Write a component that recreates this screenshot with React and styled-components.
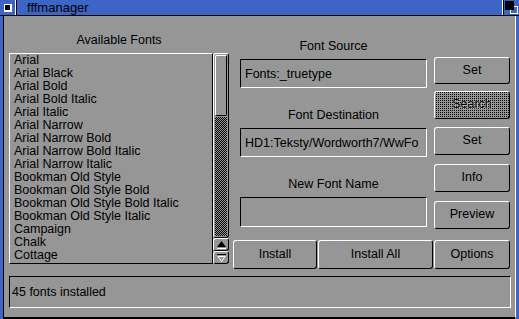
import React from "react";
import styled, { createGlobalStyle, css } from "styled-components";

// Amiga Workbench palette
const GRAY = "#969696";
const BLUE = "#3d65c5";

const GlobalStyle = createGlobalStyle`
  html, body {
    margin: 0;
    padding: 0;
    width: 519px;
    height: 319px;
    overflow: hidden;
    background: ${GRAY};
  }
  * {
    box-sizing: border-box;
  }
`;

const raised = css`
  border: 1px solid;
  border-color: #fff #000 #000 #fff;
`;

const recessed = css`
  border: 1px solid;
  border-color: #000 #fff #fff #000;
`;

const Window = styled.div`
  width: 519px;
  height: 319px;
  display: flex;
  flex-direction: column;
  background: ${BLUE};
  font-family: "Liberation Sans", Arial, sans-serif;
  font-size: 12.5px;
  color: #000;
`;

const TitleBar = styled.div`
  height: 16px;
  display: flex;
  align-items: stretch;
  border-bottom: 1px solid #000;
`;

const CloseGadget = styled.div`
  width: 17px;
  display: flex;
  align-items: center;
  justify-content: center;
  border-right: 1px solid #000;
  box-shadow: inset -1px 0 0 #fff;
`;

const CloseBox = styled.div`
  width: 8px;
  height: 8px;
  background: #000;
  border: 1px solid #fff;
  border-right-width: 2px;
  border-bottom-width: 2px;
`;

const Title = styled.div`
  flex: 1;
  padding-left: 10px;
  font-size: 13px;
  line-height: 15px;
`;

const DepthGadget = styled.div`
  width: 16px;
  display: flex;
  align-items: center;
  justify-content: center;
  border-left: 1px solid #000;
  box-shadow: -1px 0 0 #fff;
`;

const Body = styled.div`
  flex: 1;
  margin: 0 3px;
  background: ${GRAY};
  border-left: 1px solid #000;
  border-right: 1px solid #fff;
  border-bottom: 2px solid #000;
  padding: 3px 4px 9px 5px;
  display: flex;
  flex-direction: column;
  gap: 7px;
`;

const Main = styled.div`
  height: 250px;
  display: flex;
  gap: 4px;
`;

const LeftColumn = styled.div`
  width: 220px;
  display: flex;
  flex-direction: column;
`;

const Label = styled.div`
  height: ${(p) => p.$h}px;
  display: flex;
  align-items: flex-end;
  justify-content: center;
  padding-bottom: 6px;
  line-height: 13px;
  white-space: nowrap;
`;

const ListRow = styled.div`
  height: 211px;
  display: flex;
`;

const FontList = styled.div`
  width: 204px;
  ${raised};
  padding-left: 4px;
  overflow: hidden;
`;

const FontItem = styled.div`
  height: 13px;
  line-height: 13px;
  white-space: nowrap;
`;

const Scroller = styled.div`
  width: 16px;
  display: flex;
  flex-direction: column;
`;

const PropGadget = styled.div`
  flex: 1;
  ${raised};
  border-radius: 3px;
  padding: 1px;
  display: flex;
  flex-direction: column;
`;

const Knob = styled.div`
  height: 61px;
  ${raised};
  border-radius: 2px;
`;

const Track = styled.div`
  flex: 1;
  margin-top: 1px;
  background-color: ${GRAY};
  background-image: repeating-conic-gradient(#000 0 25%, transparent 0 50%);
  background-size: 2px 2px;
`;

const ArrowButton = styled.div`
  height: 13px;
  ${raised};
  border-radius: 3px;
  display: flex;
  align-items: center;
  justify-content: center;
`;

const RightColumn = styled.div`
  width: 277px;
  display: flex;
  flex-direction: column;
`;

const Upper = styled.div`
  display: flex;
  gap: 2px;
`;

const FieldColumn = styled.div`
  width: 199px;
  padding: 0 5px 0 7px;
  display: flex;
  flex-direction: column;
`;

const Field = styled.div`
  height: ${(p) => p.$h || 29}px;
  ${recessed};
  padding-left: 4px;
  display: flex;
  align-items: center;
  white-space: nowrap;
  overflow: hidden;
`;

const ButtonColumn = styled.div`
  width: 76px;
  display: flex;
  flex-direction: column;
`;

const Button = styled.div`
  height: ${(p) => p.$h || 28}px;
  margin-top: ${(p) => p.$mt || 0}px;
  ${raised};
  border-radius: 3px;
  display: flex;
  align-items: center;
  justify-content: center;
  padding-bottom: 2px;
  white-space: nowrap;
  ${(p) => p.$grow && "flex: 1;"}
  ${(p) => p.$w && `width: ${p.$w}px;`}
  ${(p) =>
    p.$ghost &&
    css`
      background-color: ${GRAY};
      background-image: conic-gradient(from 0deg at 1px 1px, #000 0 25%, transparent 0);
      background-size: 2px 2px;
      color: #000;
      text-shadow: 1px 0 0 rgba(255, 255, 255, 0.45), 0 1px 0 rgba(255, 255, 255, 0.35);
    `}
`;

const ButtonRow = styled.div`
  margin-top: auto;
  height: 29px;
  display: flex;
  gap: 1px;
`;

const Status = styled.div`
  height: 32px;
  ${recessed};
  padding-left: 2px;
  display: flex;
  align-items: center;
`;

const fonts = [
  "Arial",
  "Arial Black",
  "Arial Bold",
  "Arial Bold Italic",
  "Arial Italic",
  "Arial Narrow",
  "Arial Narrow Bold",
  "Arial Narrow Bold Italic",
  "Arial Narrow Italic",
  "Bookman Old Style",
  "Bookman Old Style Bold",
  "Bookman Old Style Bold Italic",
  "Bookman Old Style Italic",
  "Campaign",
  "Chalk",
  "Cottage",
];

const DepthIcon = () => (
  <svg width="13" height="13" viewBox="0 0 13 13">
    <rect x="5.5" y="5.5" width="7" height="7" fill={BLUE} stroke="#fff" />
    <rect x="1" y="1" width="8" height="8" fill="#000" />
    <rect x="0.5" y="0.5" width="8" height="8" fill="none" stroke="#000" />
  </svg>
);

const UpArrow = () => (
  <svg width="9" height="8" viewBox="0 0 9 8">
    <polygon points="4.5,0 9,6 0,6" fill="#000" />
    <line x1="0" y1="7.5" x2="9" y2="7.5" stroke="#fff" />
  </svg>
);

const DownArrow = () => (
  <svg width="9" height="8" viewBox="0 0 9 8">
    <line x1="0" y1="0.5" x2="9" y2="0.5" stroke="#000" />
    <polygon points="1,2.5 8,2.5 4.5,7.5" fill="none" stroke="#fff" />
  </svg>
);

const App = () => {
  return (
    <>
      <GlobalStyle />
      <Window>
        <TitleBar>
          <CloseGadget>
            <CloseBox />
          </CloseGadget>
          <Title>fffmanager</Title>
          <DepthGadget>
            <DepthIcon />
          </DepthGadget>
        </TitleBar>
        <Body>
          <Main>
            <LeftColumn>
              <Label $h={34}>Available Fonts</Label>
              <ListRow>
                <FontList>
                  {fonts.map((f) => (
                    <FontItem key={f}>{f}</FontItem>
                  ))}
                </FontList>
                <Scroller>
                  <PropGadget>
                    <Knob />
                    <Track />
                  </PropGadget>
                  <ArrowButton>
                    <UpArrow />
                  </ArrowButton>
                  <ArrowButton>
                    <DownArrow />
                  </ArrowButton>
                </Scroller>
              </ListRow>
            </LeftColumn>
            <RightColumn>
              <Upper>
                <FieldColumn>
                  <Label $h={40}>Font Source</Label>
                  <Field>Fonts:_truetype</Field>
                  <Label $h={40}>Font Destination</Label>
                  <Field>HD1:Teksty/Wordworth7/WwFo</Field>
                  <Label $h={40}>New Font Name</Label>
                  <Field $h={30} />
                </FieldColumn>
                <ButtonColumn>
                  <Button $mt={38} $h={27}>Set</Button>
                  <Button $mt={7} $ghost>Search</Button>
                  <Button $mt={8}>Set</Button>
                  <Button $mt={9}>Info</Button>
                  <Button $mt={9}>Preview</Button>
                </ButtonColumn>
              </Upper>
              <ButtonRow>
                <Button $h={29} $w={84}>Install</Button>
                <Button $h={29} $grow>Install All</Button>
                <Button $h={29} $w={76}>Options</Button>
              </ButtonRow>
            </RightColumn>
          </Main>
          <Status>45 fonts installed</Status>
        </Body>
      </Window>
    </>
  );
};

export default App;
